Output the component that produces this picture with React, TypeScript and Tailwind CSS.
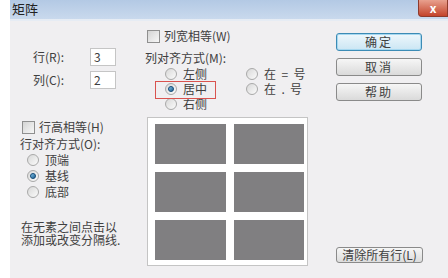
const FONT = "font-['Noto_Sans_CJK_SC','Noto_Sans',sans-serif]";

function Radio({ checked }: { checked?: boolean }) {
  return (
    <span className="w-3 h-3 rounded-full border border-[#a9a9a9] bg-[#ececec] bg-[linear-gradient(135deg,#d8d8d8,#fbfbfb)] flex items-center justify-center shrink-0">
      {checked && (
        <span className="w-[6px] h-[6px] rounded-full bg-[#2a73a8] bg-[linear-gradient(135deg,#7fc0e8,#1d5f8f)] border border-[#1b4f7a]" />
      )}
    </span>
  );
}

function Check() {
  return (
    <span className="w-[13px] h-[13px] border border-[#8f8f8f] bg-[#e6e6e6] bg-[linear-gradient(135deg,#d4d4d4,#f7f7f7)] shrink-0" />
  );
}

function RadioRow({ label, checked }: { label: string; checked?: boolean }) {
  return (
    <div className="flex items-center gap-[6px] h-[15px]">
      <Radio checked={checked} />
      <span className="whitespace-pre">{label}</span>
    </div>
  );
}

function Button({ label, primary }: { label: string; primary?: boolean }) {
  return (
    <div
      className={`w-[86px] h-[18px] rounded-[3px] border flex items-center justify-center tracking-[2px] ${
        primary
          ? "border-[#3c8bb5] bg-[#ddeff8] bg-[linear-gradient(to_bottom,#eef7fc,#cbe6f4)] shadow-[inset_0_0_0_1px_#a6d8f0]"
          : "border-[#8a8a8a] bg-[#ebebeb] bg-[linear-gradient(to_bottom,#f6f6f6,#dadada)]"
      }`}
    >
      {label}
    </div>
  );
}

export default function App() {
  return (
    <div className={`w-[448px] h-[278px] flex flex-col bg-white overflow-hidden text-[12px] leading-[14px] text-[#404040] ${FONT}`}>
      {/* title bar */}
      <div className="h-[19px] shrink-0 flex">
        <div className="w-[10px] bg-white" />
        <div className="flex-1 bg-[#bccfe7] bg-[linear-gradient(to_bottom,#b3c9e4,#c9d9ed)] flex items-start justify-between">
          <span className="ml-[2px] text-[13px] leading-[17px] text-[#222]">矩阵</span>
          <span className="w-[30px] h-[17px] rounded-bl-[4px] border border-t-0 border-[#8e3a2c] bg-[#cf5a42] bg-[linear-gradient(to_bottom,#e8a08e,#c4442b)] flex items-center justify-center text-white font-bold text-[12px] leading-none">
            x
          </span>
        </div>
      </div>

      <div className="flex-1 flex">
        <div className="w-[10px] shrink-0 bg-white" />
        <div className="flex-1 flex flex-col">
          <div className="h-[2px] shrink-0 bg-[#e6ecf4]" />

          {/* body */}
          <div className="flex-1 flex bg-[#f0eff1] relative">
            {/* left column */}
            <div className="w-[135px] flex flex-col">
              <div className="mt-[27px] ml-[23px] grid grid-cols-[57px_26px] gap-y-[5px] items-center">
                <span>行(R):</span>
                <div className="h-[18px] bg-white border border-[#c5c5c5] pl-[3px] flex items-center">3</div>
                <span>列(C):</span>
                <div className="h-[18px] bg-white border border-[#c5c5c5] pl-[3px] flex items-center">2</div>
              </div>
              <div className="mt-[31px] ml-[12px] flex items-center gap-[4px]">
                <Check />
                <span>行高相等(H)</span>
              </div>
              <div className="mt-[3px] ml-[10px]">行对齐方式(O):</div>
              <div className="mt-[1px] ml-[17px] flex flex-col gap-[1px]">
                <RadioRow label="顶端" />
                <RadioRow label="基线" checked />
                <RadioRow label="底部" />
              </div>
              <div className="mt-[21px] ml-[11px] leading-[13px]">
                在无素之间点击以
                <br />
                添加或改变分隔线.
              </div>
            </div>

            {/* middle column */}
            <div className="w-[167px] flex flex-col">
              <div className="mt-[8px] ml-[2px] flex items-center gap-[4px]">
                <Check />
                <span>列宽相等(W)</span>
              </div>
              <div className="mt-[8px]">列对齐方式(M):</div>
              <div className="flex mt-[1px]">
                <div className="ml-[20px] w-[81px] flex flex-col">
                  <RadioRow label="左侧" />
                  <RadioRow label="居中" checked />
                  <RadioRow label="右侧" />
                </div>
                <div className="flex flex-col">
                  <RadioRow label="在  =  号" />
                  <RadioRow label="在  .  号" />
                </div>
              </div>
              <div className="mt-[6px] ml-[2px] w-[161px] h-[149px] bg-white border border-[#c4c4c4] pl-[7px] pt-[6px] grid grid-cols-[71px_70px] grid-rows-[40px_40px_40px] gap-x-[8px] gap-y-[8px] content-start">
                {Array.from({ length: 6 }).map((_, i) => (
                  <div key={i} className="bg-[#807f81]" />
                ))}
              </div>
            </div>

            {/* right column */}
            <div className="flex-1 flex flex-col pl-[24px]">
              <div className="mt-[12px] flex flex-col gap-[7px]">
                <Button label="确定" primary />
                <Button label="取消" />
                <Button label="帮助" />
              </div>
              <div className="mt-auto mb-[15px] w-[87px] h-[16px] rounded-[3px] border border-[#8a8a8a] bg-[#ebebeb] bg-[linear-gradient(to_bottom,#f6f6f6,#dcdcdc)] flex items-center justify-center">
                清除所有行(L)
              </div>
            </div>

            {/* highlight annotation */}
            <div className="absolute left-[145px] top-[60px] w-[61px] h-[18px] border border-[#d9534f]" />
          </div>
        </div>
      </div>
    </div>
  );
}
